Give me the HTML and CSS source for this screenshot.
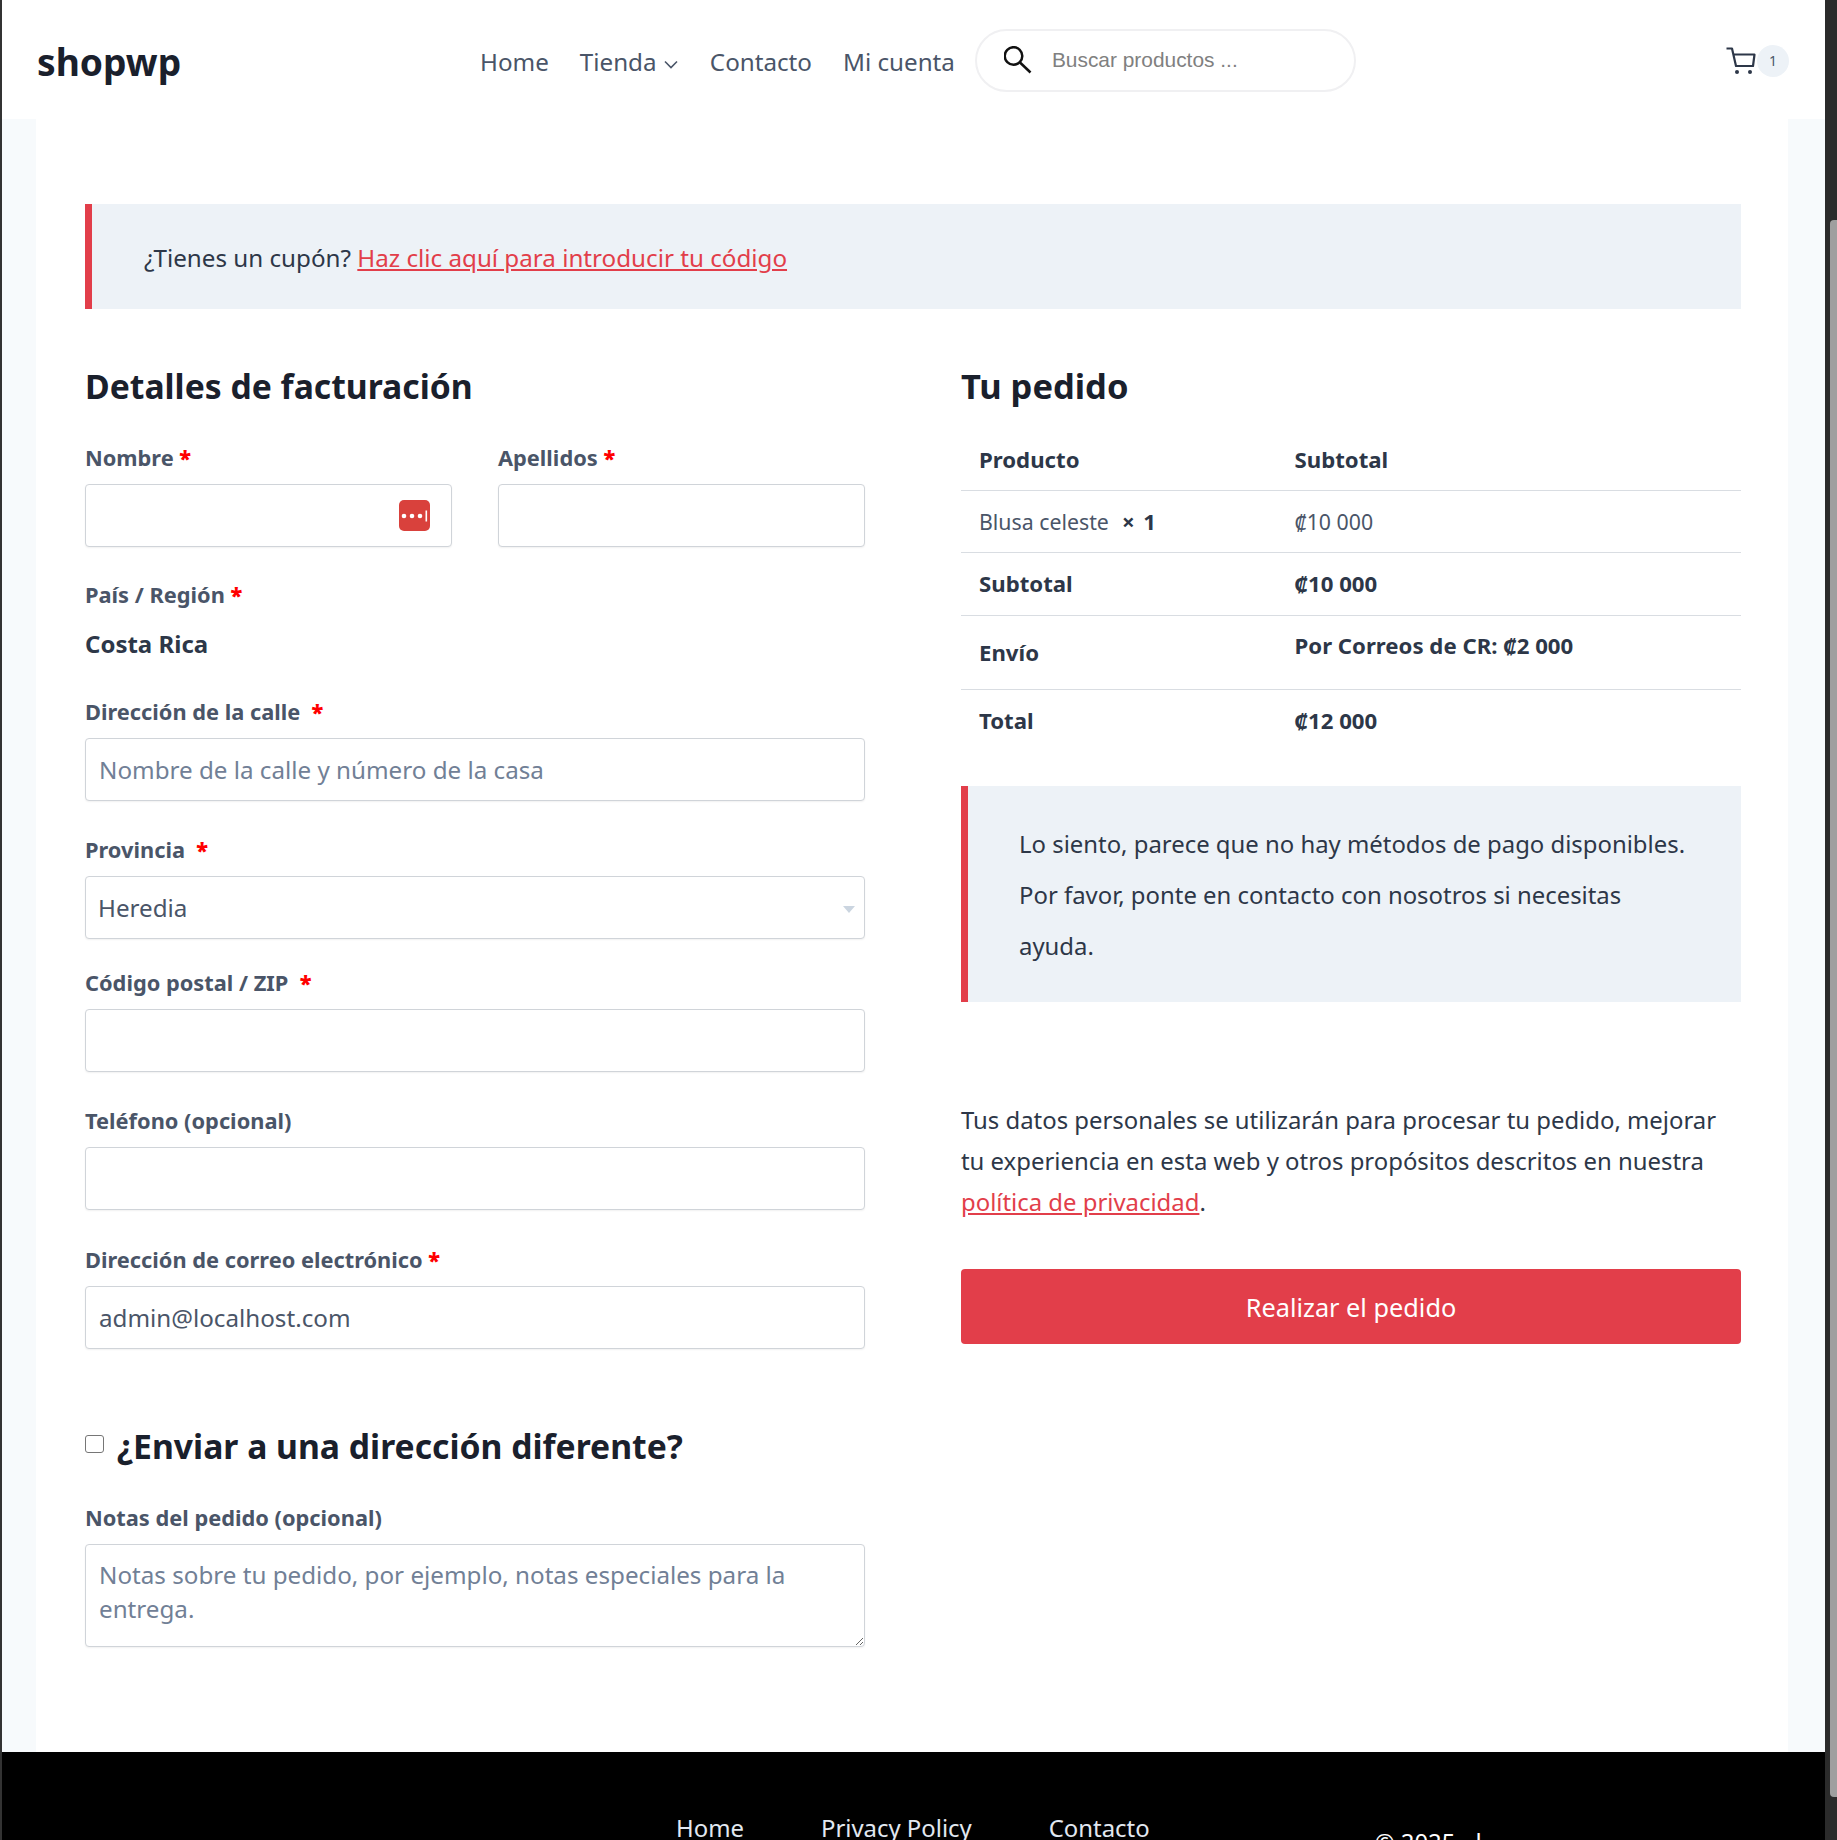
FILE: index.html
```html
<!DOCTYPE html>
<html lang="es">

<head>
    <meta charset="UTF-8">
    <title>Finalizar compra - shopwp</title>
    <link rel="stylesheet" href="styles.css">
</head>

<body>
    <div class="page">
        <header class="top">
            <a class="logo" href="#">shopwp</a>
            <nav class="menu">
                <a href="#">Home</a>
                <a href="#">Tienda
                    <svg class="chev" width="14" height="9" viewBox="0 0 14 9"><path d="M1 1.5l6 6 6-6" fill="none" stroke="#4a5568" stroke-width="1.6"/></svg>
                </a>
                <a href="#">Contacto</a>
                <a href="#">Mi cuenta</a>
            </nav>
            <div class="search">
                <svg width="28" height="28" viewBox="0 0 28 28"><circle cx="9.500" cy="10" r="8.800" fill="none" stroke="#111" stroke-width="2.500"/><path d="M16 16.500l10.500 10" fill="none" stroke="#111" stroke-width="2.500"/></svg>
                <input type="text" placeholder="Buscar productos ...">
            </div>
            <div class="cart">
                <svg width="30" height="28" viewBox="0 0 30 28"><path d="M0.500 1.500H6L10 19H27L28.500 7.500H7" fill="none" stroke="#2d3748" stroke-width="2.200" stroke-linejoin="round"/><circle cx="11" cy="25" r="2" fill="#2d3748"/><circle cx="24" cy="25" r="2" fill="#2d3748"/></svg>
                <span class="count">1</span>
            </div>
        </header>

        <main class="wrap">
            <div class="card">
                <div class="notice coupon">¿Tienes un cupón? <a href="#">Haz clic aquí para introducir tu código</a></div>

                <div class="cols">
                    <form class="billing">
                        <h2>Detalles de facturación</h2>
                        <div class="pair">
                            <div class="field">
                                <label>Nombre <b>*</b></label>
                                <div class="inp">
                                    <input type="text">
                                    <svg class="pass" width="31" height="31" viewBox="0 0 31 31"><rect width="31" height="31" rx="5" fill="#d9413c"/><circle cx="5" cy="16" r="2.300" fill="#fff"/><circle cx="13" cy="16" r="2.300" fill="#fff"/><circle cx="21" cy="16" r="2.300" fill="#fff"/><rect x="26.500" y="10.500" width="1.600" height="11" fill="#fff"/></svg>
                                </div>
                            </div>
                            <div class="field">
                                <label>Apellidos <b>*</b></label>
                                <input type="text">
                            </div>
                        </div>
                        <div class="field country">
                            <label>País / Región <b>*</b></label>
                            <strong>Costa Rica</strong>
                        </div>
                        <div class="field">
                            <label>Dirección de la calle &nbsp;<b>*</b></label>
                            <input type="text" placeholder="Nombre de la calle y número de la casa">
                        </div>
                        <div class="field prov">
                            <label>Provincia &nbsp;<b>*</b></label>
                            <div class="sel">
                                <select><option>Heredia</option></select>
                            </div>
                        </div>
                        <div class="field short">
                            <label>Código postal / ZIP &nbsp;<b>*</b></label>
                            <input type="text">
                        </div>
                        <div class="field phone">
                            <label>Teléfono (opcional)</label>
                            <input type="text">
                        </div>
                        <div class="field">
                            <label>Dirección de correo electrónico <b>*</b></label>
                            <input type="text" value="admin@localhost.com">
                        </div>
                        <h3 class="ship"><input type="checkbox"> ¿Enviar a una dirección diferente?</h3>
                        <div class="field">
                            <label>Notas del pedido (opcional)</label>
                            <textarea placeholder="Notas sobre tu pedido, por ejemplo, notas especiales para la entrega."></textarea>
                        </div>
                    </form>

                    <section class="order">
                        <h2>Tu pedido</h2>
                        <table>
                            <tr class="r-head"><th>Producto</th><th>Subtotal</th></tr>
                            <tr class="r-item"><td>Blusa celeste &nbsp;<b>× 1</b></td><td>₡10 000</td></tr>
                            <tr class="r-sub"><th>Subtotal</th><th>₡10 000</th></tr>
                            <tr class="r-ship"><th>Envío</th><th class="top-cell">Por Correos de CR: ₡2 000</th></tr>
                            <tr class="r-total"><th>Total</th><th>₡12 000</th></tr>
                        </table>
                        <div class="notice nopay">Lo siento, parece que no hay métodos de pago disponibles. Por favor, ponte en contacto con nosotros si necesitas ayuda.</div>
                        <p class="privacy">Tus datos personales se utilizarán para procesar tu pedido, mejorar tu experiencia en esta web y otros propósitos descritos en nuestra <a href="#">política de privacidad</a>.</p>
                        <button type="button" class="place">Realizar el pedido</button>
                    </section>
                </div>
            </div>
        </main>

        <footer class="foot">
            <nav class="foot-menu">
                <a href="#">Home</a>
                <a href="#">Privacy Policy</a>
                <a href="#">Contacto</a>
            </nav>
            <span class="copy">© 2025 - l</span>
        </footer>
    </div>

    <div class="bar"><span class="thumb"></span></div>
</body>

</html>
```

FILE: styles.css
```css
* {
    box-sizing: border-box;
}

html,
body {
    margin: 0;
    padding: 0;
    height: 1840px;
    overflow: hidden;
}

body {
    display: flex;
    background: #f7fafc;
    color: #2d3748;
    font-family: "Noto Sans", "Open Sans", sans-serif;
    font-size: 24px;
    border-left: 2px solid #333;
}

a {
    color: inherit;
    text-decoration: none;
}

.page {
    flex: 1;
    min-width: 0;
}

/* cabecera */
.top {
    display: flex;
    align-items: center;
    height: 119px;
    background: #fff;
    padding: 4px 0 0 35px;
}

.logo {
    width: 443px;
    font-size: 37.2px;
    font-weight: 700;
    color: #1a202c;
}

.menu {
    display: flex;
    gap: 31px;
    color: #4a5568;
    font-size: 24.2px;
    margin-right: 20px;
}

.chev {
    position: relative;
    top: -2px;
    margin-left: 1px;
    margin-right: 1px;
}

.search {
    display: flex;
    align-items: center;
    width: 381px;
    height: 63px;
    margin-top: -3px;
    padding-left: 27px;
    border: 2px solid #f0f0f2;
    border-radius: 32px;
    background: #fff;
}

.search input {
    width: 290px;
    margin-left: 18px;
    border: 0;
    outline: 0;
    font-family: "Liberation Sans", sans-serif;
    font-size: 20.9px;
    background: none;
}

.search input::placeholder {
    color: #808080;
}

.cart {
    display: flex;
    align-items: center;
    margin-left: auto;
    margin-right: 36px;
    margin-top: -2px;
}

.count {
    width: 32px;
    height: 32px;
    margin-left: 1px;
    border-radius: 50%;
    background: #edf2f7;
    color: #4a5568;
    font-size: 14px;
    line-height: 32px;
    text-align: center;
}

/* contenido */
.wrap {
    padding: 0 37px 0 34px;
}

.card {
    height: 1633px;
    background: #fff;
    padding: 85px 47px 0 49px;
}

.notice {
    background: #edf2f7;
    border-left: 7px solid #e23e4a;
}

.coupon {
    height: 105px;
    padding: 0 0 0 52px;
    font-size: 24.2px;
    line-height: 108px;
    color: #2d3748;
}

.coupon a,
.privacy a {
    color: #e23e4a;
    text-decoration: underline;
}

.cols {
    display: grid;
    grid-template-columns: 780px 780px;
    gap: 96px;
}

h2 {
    margin: 52px 0 0;
    font-size: 33.7px;
    line-height: 50px;
    color: #1a202c;
}

.order h2 {
    font-size: 34.5px;
}

.pair {
    display: grid;
    grid-template-columns: 367px 367px;
    gap: 46px;
}

.field {
    margin-top: 33px;
}

.pair .field {
    margin-top: 30px;
}

.field label {
    display: block;
    height: 34px;
    margin-bottom: 9px;
    font-size: 21.8px;
    line-height: 34px;
    font-weight: 700;
    color: #4a5568;
}

.field label b {
    color: #f00;
}

.field input,
.field select,
.field textarea {
    display: block;
    width: 100%;
    height: 63px;
    padding: 0 13px;
    border: 1px solid #d0d4d9;
    border-radius: 4px;
    background: #fff;
    color: #4a5568;
    font-family: inherit;
    font-size: 24.2px;
    box-shadow: 0 1px 2px rgba(0, 0, 0, 0.06);
}

.field input::placeholder,
.field textarea::placeholder {
    color: #718096;
}

.field select {
    appearance: none;
    padding-left: 12px;
}

.inp,
.sel {
    position: relative;
}

.pass {
    position: absolute;
    top: 16px;
    right: 22px;
}

.sel::after {
    content: "";
    position: absolute;
    top: 30px;
    right: 10px;
    border-left: 6px solid transparent;
    border-right: 6px solid transparent;
    border-top: 7px solid #cbd5e0;
}

.country {
    margin-top: 31px;
}

.country strong {
    display: block;
    font-size: 24px;
    color: #2d3748;
    line-height: 36px;
    margin-top: 14px;
    margin-bottom: 33px;
}

.prov {
    margin-top: 32px;
}

.short {
    margin-top: 27px;
}

.phone {
    margin-top: 32px;
}

.ship {
    display: flex;
    align-items: center;
    gap: 13px;
    margin: 72px 0 0;
    font-size: 33.7px;
    line-height: 50px;
    color: #1a202c;
}

.ship input {
    width: 19px;
    height: 18px;
    margin: -4px 0 0;
    appearance: none;
    border: 1px solid #767676;
    border-radius: 3px;
    background: #fff;
}

.ship + .field {
    margin-top: 30px;
}

.field textarea {
    height: 103px;
    padding: 13px;
    line-height: 34px;
    resize: vertical;
}

/* pedido */
table {
    width: 100%;
    margin-top: 17px;
    border-collapse: collapse;
    table-layout: fixed;
    font-size: 21.3px;
}

th,
td {
    padding: 0 18px;
    text-align: left;
    vertical-align: middle;
    border-bottom: 1px solid #d9dde2;
}

th:first-child,
td:first-child {
    width: 315.5px;
}

th {
    color: #2d3748;
    font-size: 22.2px;
    font-weight: 700;
}

td {
    color: #4a5568;
}

td b {
    margin-left: 2px;
    color: #2d3748;
    font-size: 22.2px;
    word-spacing: 3px;
}

.r-head {
    height: 62px;
}

.r-head th {
    padding-top: 2px;
}

.r-item {
    height: 62px;
}

.r-sub {
    height: 63px;
}

.r-ship {
    height: 74px;
}

.top-cell {
    padding-bottom: 14px;
}

.r-total {
    height: 63px;
}

.r-total th {
    border-bottom: 0;
}

.nopay {
    height: 216px;
    margin-top: 34px;
    padding: 32px 44px 0 51px;
    font-size: 23.9px;
    line-height: 51px;
    color: #2d3748;
}

.privacy {
    margin: 97px 16px 0 0;
    font-size: 23.9px;
    line-height: 41px;
    color: #2d3748;
}

.place {
    display: block;
    width: 100%;
    height: 75px;
    margin-top: 47px;
    border: 0;
    border-radius: 4px;
    background: #e23e4a;
    color: #fff;
    font-family: inherit;
    font-size: 25.3px;
}

/* pie */
.foot {
    display: flex;
    height: 200px;
    background: #000;
    color: #e2e8f0;
    padding: 59px 0 0 674px;
    font-size: 23.9px;
}

.foot-menu {
    display: flex;
    gap: 77px;
}

.copy {
    margin-left: 225px;
    margin-top: 14px;
    color: #fff;
}

/* barra de scroll */
.bar {
    flex: none;
    width: 12px;
    background: #2b2b2b;
    padding-top: 220px;
}

.thumb {
    display: block;
    height: 1577px;
    background: #9f9f9f;
    border-radius: 4px 0 0 4px;
    margin-left: 5px;
}
```
